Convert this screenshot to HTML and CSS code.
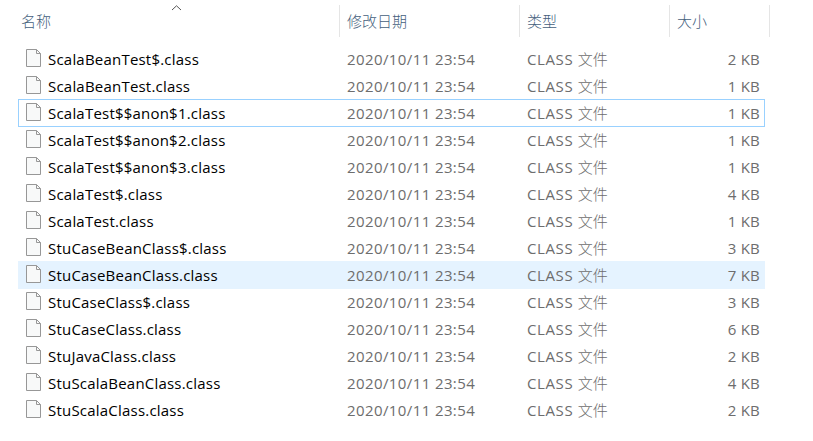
FILE: index.html
```html
<!DOCTYPE html>
<html lang="zh-CN"><head><meta charset="utf-8"><title>文件列表</title><link rel="stylesheet" href="styles.css"></head>
<body>
<div class="header"><div class="name">名称<svg class="sort" width="11" height="6" viewBox="0 0 11 6"><path d="M1 5L5.5 .8L10 5" fill="none" stroke="#555"/></svg></div><div>修改日期</div><div>类型</div><div>大小</div></div>
<div class="list" id="list"></div>
<script src="script.js"></script>
</body></html>
```
FILE: styles.css
```css
* { box-sizing: border-box; }
body { margin: 0; height: 441px; overflow: hidden; background: #fff; font: 15px/28px "Open Sans", "Noto Sans CJK SC", sans-serif; color: #6d6d6d; }
.header { display: grid; grid-template-columns: 322px 180px 150px 100px; height: 32px; margin: 5px 0 8px 18px; color: #44607c; font-weight: 300; }
.header div { position: relative; border-right: 1px solid #e5e5e5; padding-left: 7px; line-height: 32px; }
.header .name { padding-left: 3px; }
.sort { position: absolute; left: 153px; top: 0; }
.row { display: grid; grid-template-columns: 30px 299px 180px 150px 83px; width: 747px; height: 28px; margin: 0 0 -1px 18px; white-space: nowrap; }
.row svg { margin: 4px 0 0 8px; }
.file { color: #000; letter-spacing: .21px; }
.date { letter-spacing: .4px; }
.type { letter-spacing: .6px; }
.type b { font-weight: 300; letter-spacing: 0; }
.size { text-align: right; letter-spacing: .2px; }
.focus { box-shadow: inset 0 0 0 1px #99d1ff; }
.hover { background: #e5f3ff; }
```
FILE: script.js
```js
const files = [["ScalaBeanTest$",2],["ScalaBeanTest",1],["ScalaTest$$anon$1",1],["ScalaTest$$anon$2",1],["ScalaTest$$anon$3",1],["ScalaTest$",4],["ScalaTest",1],["StuCaseBeanClass$",3],["StuCaseBeanClass",7],["StuCaseClass$",3],["StuCaseClass",6],["StuJavaClass",2],["StuScalaBeanClass",4],["StuScalaClass",2]];
document.getElementById("list").innerHTML = files.map(([name, size], i) => `<div class="row ${i === 2 ? "focus" : i === 8 ? "hover" : ""}"><svg width="15" height="18" viewBox="0 0 15 18"><path d="M.5 .5h10l4 4v13H.5z" fill="#f8f9f9" stroke="#979797"/><path d="M10.5 .5v4h4" fill="none" stroke="#979797"/></svg><span class="file">${name}.class</span><span class="date">2020/10/11 23:54</span><span class="type">CLASS <b>文件</b></span><span class="size">${size} KB</span></div>`).join("");
```
